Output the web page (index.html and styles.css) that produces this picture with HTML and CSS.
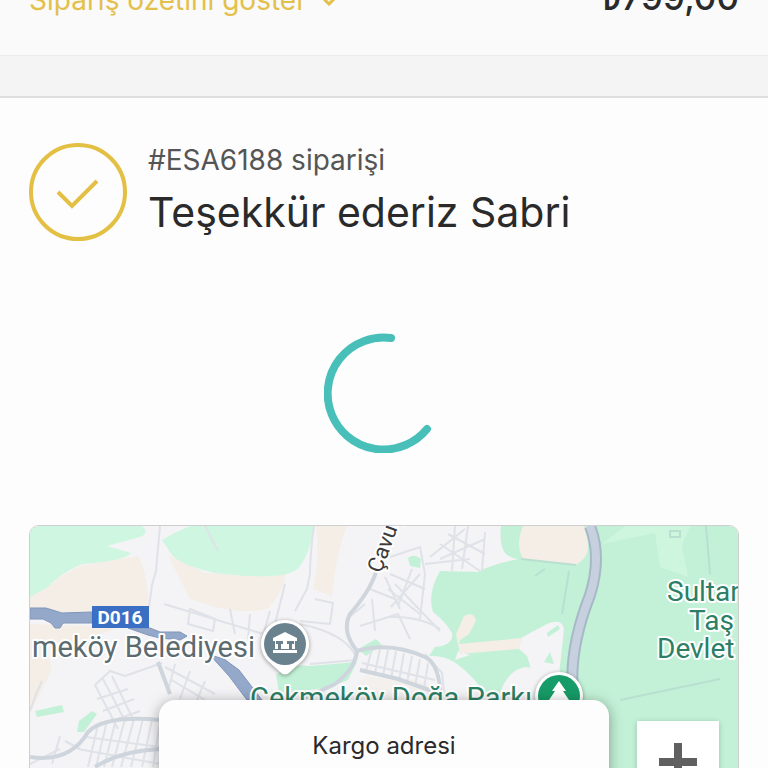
FILE: index.html
```
<!DOCTYPE html>
<html lang="tr">
<head>
    <meta charset="UTF-8">
    <meta name="viewport" content="width=device-width, initial-scale=1.0">
    <title>Sipariş</title>
    <link rel="stylesheet" href="styles.css">
</head>
<body>

    <header class="summary">
        <button class="summary-toggle" type="button">
            Sipariş özetini göster
            <svg class="chevron" viewBox="0 0 20 12" aria-hidden="true">
                <path d="M2 2 L10 10 L18 2"/>
            </svg>
        </button>
        <span class="summary-total">₺799,00</span>
    </header>
    <div class="divider"></div>

    <main class="content">
        <div class="thanks">
            <svg class="thanks-icon" viewBox="0 0 100 100" aria-hidden="true">
                <circle cx="50" cy="50" r="47"/>
                <path d="M30 50 L44 64 L69 39"/>
            </svg>
            <div class="thanks-text">
                <p class="order-number">#ESA6188 siparişi</p>
                <h1 class="title">Teşekkür ederiz Sabri</h1>
            </div>
        </div>

        <svg class="spinner" viewBox="0 0 120 120" role="img" aria-label="Yükleniyor">
            <path d="M67 5 A56 56 0 1 0 103 96"/>
        </svg>

        <section class="map">
            <svg class="map-canvas" viewBox="30 527 708 440" preserveAspectRatio="xMidYMin slice">
                <!-- sand -->
                <g class="sand">
                    <path d="M30 597 L45 590 L60 578 L80 567 L138 557 Q148 575 149 610 L30 616Z"/>
                    <path d="M168 556 L205 574 L286 575 Q284 592 268 609 Q250 616 215 608 L190 600Z"/>
                    <path d="M316 527 L347 527 Q336 555 332 597 L313 590 Q320 560 316 527Z"/>
                    <path d="M30 625 L120 628 L85 640 L45 645 L52 670 L30 715Z"/>
                    <path d="M365 676 Q380 682 410 680 L440 688 L440 701 L345 701Z" opacity=".6"/>
                </g>

                <!-- woods and parks -->
                <g class="wood">
                    <path d="M30 527 L142 527 Q150 534 140 538 L107 547 L131 554 Q125 562 82 565 Q58 576 48 588 L30 598Z"/>
                    <path d="M162 541 Q175 533 190 527 L314 527 Q309 560 296 571 Q280 582 215 574 Q180 566 172 556Z"/>
                </g>
                <g class="park">
                    <path d="M738 527 L501 527 Q499 546 505 554 Q511 560 518 560 Q490 566 478 573 L440 572 Q427 595 433 613 Q445 622 452 634 Q454 646 435 648 L429 657 Q444 656 456 664 Q477 680 489 701 L738 967Z"/>
                    <path d="M276 676 Q290 664 310 667 L357 663 L348 681 Q320 693 279 693Z"/>
                    <path d="M358 650 L376 640 L382 646 L366 657Z"/>
                    <path d="M35 712 L62 706 L64 713 L37 718Z"/>
                    <path d="M79 722 L92 712 L97 715 L84 733 L77 733Z"/>
                    <path d="M408 559 Q414 554 421 560 L420 569 L410 567Z"/>
                </g>
                <path class="meadow" d="M602 545 L625 527 L690 527 L682 547 L688 578 L660 568 L655 534 Z"/>
                <g class="land">
                    <path d="M521 639 L545 626 Q562 618 564 630 L559 676 L533 676 L527 657 L519 650Z"/>
                    <path d="M498 701 Q505 672 525 668 L560 672 L560 701Z"/>
                    <path d="M458 652 L470 656 L455 661Z"/>
                </g>
                <g class="park">
                    <path d="M547 634 L558 626 L560 630 L548 638Z"/>
                    <path d="M544 663 L550 653 L554 665Z"/>
                </g>
                <g class="sand">
                    <path d="M523 527 L584 527 Q590 545 587 554 Q584 562 575 566 L523 560 Q515 546 523 527Z"/>
                    <path d="M456 635 L464 617 Q474 612 476 622 L469 635 L460 641 L459 645 L522 639 L519 650 L460 655Z"/>
                </g>

                <!-- side streets -->
                <g class="street">
                    <path d="M160 527 L156 572 L152 586 L149 608 M205 527 L218 552"/>
                    <path d="M314 527 Q310 555 310 575 L307 590 L295 612 M164 605 L280 640 M190 610 L215 620 L213 632 L188 625Z"/>
                    <path d="M230 610 L235 635 M250 615 L248 640 M270 612 L262 640 M285 585 L275 625 M315 600 L333 604 L330 625 L300 622 M300 625 Q348 635 357 660 M310 665 L357 661"/>
                    <path d="M365 605 L347 620 M370 590 L395 600 M385 578 L400 610 M360 627 L398 615 L410 640 M372 600 L375 632 M395 585 L440 632"/>
                    <path d="M390 558 L420 548 L425 575 L420 620 M425 565 L470 560 M430 558 L465 530 M440 545 L480 572 M448 535 L485 555 M455 527 L452 572 M468 527 L462 570 M485 533 L482 572 M440 560 L485 540"/>
                    <path d="M390 575 L425 590 M388 590 L420 615 M420 575 L391 608 M412 570 L398 607 M390 618 Q420 617 440 630"/>
                    <path d="M425 655 L442 674 L445 701"/>
                    <path d="M30 712 Q35 696 42 682"/>
                    <path d="M95 686 L110 672 L125 677 L162 664 M95 686 L118 730 M103 680 L125 722 M112 677 L132 718 M97 700 L128 690 M103 712 L134 700 M110 723 L140 712"/>
                    <path d="M165 668 L215 695 M170 680 L205 701 M175 665 L168 692 M190 672 L180 700 M205 682 L197 701"/>
                </g>
                <g class="path">
                    <path d="M569 572 L562 615 M535 577 L545 570 M521 560 L576 566 M620 701 L720 680 M706 527 L710 575 M670 532 L680 532 L680 538 L670 538Z"/>
                </g>
                <g class="street">
                    <path d="M98 726 L88 768 M107 722 L96 768 M116 720 L104 768 M125 720 L112 768 M134 720 L121 768 M143 720 L131 768 M152 721 L142 768 M160 724 L153 768"/>
                    <path d="M86 738 L160 748 M78 750 L160 765 M60 737 L52 765 M65 742 L80 750 M30 765 L60 750"/>
                    <path d="M372 650 L366 672 M380 650 L375 674 M388 651 L383 677 M396 652 L391 680 M404 654 L399 682 M412 657 L407 684 M420 660 L415 687 M428 664 L424 690 M362 664 L435 681"/>
                </g>

                <!-- main streets -->
                <g class="avenue">
                    <path d="M376 573 Q370 592 350 615 Q341 632 357 652 Q355 670 335 685 L300 701"/>
                    <path d="M357 652 Q390 642 425 658 Q440 665 441 701 M360 671 L398 680 L435 693"/>
                    <path d="M30 758 Q70 764 88 733 Q105 716 160 721 M158 663 L170 695 M95 768 Q120 752 160 750"/>
                </g>
                <path class="river-edge" d="M590 527 Q602 558 590 596 Q569 650 573 692"/>
                <path class="river" d="M590 527 Q602 558 590 596 Q569 650 573 692"/>

                <!-- highway -->
                <path class="highway" d="M30 609 L46 609 L62 614 L92 613 V624 L63 624 L60 629 H55 L51 624 L43 620 L30 620Z"/>
                <path class="highway" d="M128 629 L150 629 L160 633 L180 633 L187 637 L180 641 L160 639 L148 636Z"/>
                <path class="highway" d="M210 656 L224 660 L239 671 L262 701 H247 L229 677Z"/>

                <!-- labels -->
                <rect class="shield" x="92" y="607" width="57" height="22"/>
                <text class="shield-text" x="120" y="625">D016</text>
                <text class="label place" x="32" y="658">meköy Belediyesi</text>
                <text class="label street-name" transform="translate(381 575) rotate(-70)">Çavuş</text>
                <text class="label place green" x="250" y="709">Çekmeköy Doğa Parkı</text>
                <text class="label green" x="667" y="602">Sultan</text>
                <text class="label green" x="689" y="631">Taş</text>
                <text class="label green" x="657" y="659">Devlet</text>

                <!-- town hall pin -->
                <path class="pin" d="M285 621 A24 24 0 0 0 268 662 L280 673 Q285 678 290 673 L302 662 A24 24 0 0 0 285 621Z"/>
                <circle class="pin-hall" cx="285" cy="645" r="21"/>
                <path class="pin-glyph" d="M285 633 L297 639 V642 H295 V650 H292 V645 H294 V642 H287 V645 H289 V650 H281 V645 H283 V642 H276 V645 H278 V650 H275 V642 H273 V639Z M273 651 H297 V654 H273Z"/>

                <!-- park pin -->
                <circle class="pin" cx="559" cy="697" r="24"/>
                <circle class="pin-park" cx="559" cy="697" r="21"/>
                <path class="pin-glyph" d="M559 682 L566 692 H563 L569 701 H549 L555 692 H552Z"/>
            </svg>

            <div class="callout">Kargo adresi</div>
            <button class="zoom-in" type="button" aria-label="Yakınlaştır">
                <svg viewBox="0 0 38 38" aria-hidden="true">
                    <path d="M15 0 H23 V15 H38 V23 H23 V38 H15 V23 H0 V15 H15Z"/>
                </svg>
            </button>
        </section>
    </main>

</body>
</html>
```
FILE: styles.css
```
* {
    box-sizing: border-box;
}

html {
    overflow: hidden;
}

body {
    font-family: Inter, 'Liberation Sans', sans-serif;
    background-color: #fdfdfd;
    color: #2a2a2a;
    margin: 0;
    height: 100vh;
    overflow: hidden;
}

/* partly scrolled out of view */
.summary {
    display: flex;
    justify-content: space-between;
    align-items: baseline;
    height: 112px;
    margin-top: -56px;
    padding: 32px 29px 0;
    background-color: #fafafa;
    border-bottom: 1px solid #ececec;
}

.summary-toggle {
    display: flex;
    align-items: center;
    gap: 12px;
    padding: 0;
    border: none;
    background: none;
    color: #e3c04b;
    font-family: inherit;
    font-size: 28px;
    cursor: pointer;
}

.chevron {
    width: 20px;
    height: 12px;
    fill: none;
    stroke: #e3c04b;
    stroke-width: 3;
}

.summary-total {
    font-size: 35px;
    font-weight: 500;
}

.divider {
    height: 42px;
    background-color: #f4f4f4;
    border-bottom: 2px solid #dedede;
}

.content {
    padding: 42px 29px 0;
}

.thanks {
    display: flex;
    align-items: center;
    gap: 20px;
}

.thanks-icon {
    flex: none;
    width: 100px;
    height: 100px;
    margin-left: -1px;
    fill: none;
    stroke: #e3bf43;
    stroke-width: 4;
}

.order-number {
    margin: 0;
    color: #555;
    font-size: 28px;
    line-height: 40px;
}

.title {
    margin: 0;
    font-size: 41px;
    font-weight: 400;
    line-height: 64px;
}

.spinner {
    display: block;
    width: 120px;
    height: 120px;
    margin: 89px auto 72px;
    fill: none;
    stroke: #48c0b9;
    stroke-width: 8;
    stroke-linecap: round;
}

.map {
    position: relative;
    height: 440px;
    border: 1px solid #cfcfcf;
    border-radius: 10px;
    background-color: #f4f3f5;
    overflow: hidden;
}

.map-canvas {
    display: block;
    width: 100%;
    height: 100%;
}

.sand {
    fill: #f4eee7;
}

.wood {
    fill: #cff6e0;
}

.park {
    fill: #c3f1d7;
}

.meadow {
    fill: #cef5dd;
}

.land {
    fill: #f4f3f5;
}

.street {
    fill: none;
    stroke: #dfe2e8;
    stroke-width: 2;
}

.path {
    fill: none;
    stroke: #b8dfcf;
    stroke-width: 2;
}

.avenue {
    fill: none;
    stroke: #ced5dc;
    stroke-width: 4;
}

.river-edge {
    fill: none;
    stroke: #a7b8c6;
    stroke-width: 12;
}

.river {
    fill: none;
    stroke: #c6d0df;
    stroke-width: 8;
}

.highway {
    fill: #94a9ca;
    stroke: #8095ba;
    stroke-width: 1;
}

.shield {
    fill: #3b6fc4;
}

.shield-text {
    fill: #fff;
    font-family: Roboto, sans-serif;
    font-size: 19px;
    font-weight: 700;
    text-anchor: middle;
}

.label {
    fill: #5b6b70;
    stroke: #fff;
    stroke-width: 4;
    stroke-linejoin: round;
    paint-order: stroke;
    font-family: Roboto, sans-serif;
    font-size: 28px;
}

.place {
    font-size: 29px;
}

.street-name {
    fill: #3c3c3c;
    font-size: 22px;
}

.green {
    fill: #2b7f65;
}

.pin {
    fill: #fff;
    filter: drop-shadow(0 1px 2px rgba(0, 0, 0, 0.4));
}

.pin-hall {
    fill: #6a828d;
}

.pin-park {
    fill: #169c68;
}

.pin-glyph {
    fill: #fff;
}

.callout {
    position: absolute;
    top: 174px;
    left: 50%;
    width: 450px;
    max-width: 80%;
    height: 160px;
    padding-top: 30px;
    transform: translateX(-50%);
    background-color: #fdfdfd;
    border-radius: 16px;
    box-shadow: 0 2px 14px rgba(0, 0, 0, 0.35);
    font-size: 24px;
    line-height: 32px;
    text-align: center;
}

.zoom-in {
    position: absolute;
    top: 195px;
    right: 19px;
    display: flex;
    justify-content: center;
    align-items: center;
    width: 82px;
    height: 82px;
    border: none;
    background-color: #fff;
    box-shadow: 0 1px 6px rgba(0, 0, 0, 0.2);
    cursor: pointer;
}

.zoom-in svg {
    width: 38px;
    height: 38px;
    fill: #606060;
}
```
